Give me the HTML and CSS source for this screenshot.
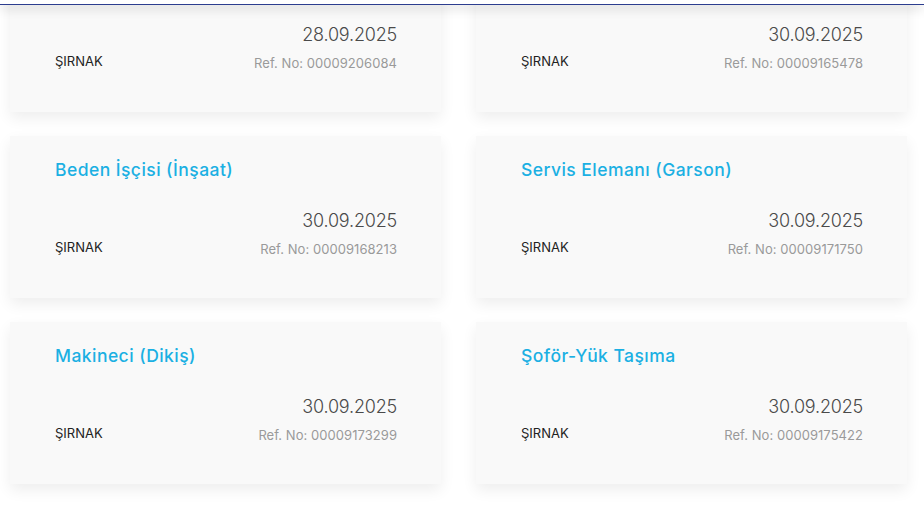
FILE: index.html
```html
<!DOCTYPE html>
<html lang="tr">
<head>
  <meta charset="UTF-8" />
  <meta name="viewport" content="width=device-width, initial-scale=1.0"/>
  <title>İş İlanları</title>
  <link rel="stylesheet" href="styles.css">
</head>
<body>

  <div class="top-bar"></div>

  <div class="job-list">
    <div class="job-card">
      <h3 class="job-title">Garson</h3>
      <div class="job-meta">
        <span class="job-city">ŞIRNAK</span>
        <div class="job-info">
          <span class="job-date">28.09.2025</span>
          <span class="job-ref">Ref. No: 00009206084</span>
        </div>
      </div>
    </div>
    <div class="job-card">
      <h3 class="job-title">Garson</h3>
      <div class="job-meta">
        <span class="job-city">ŞIRNAK</span>
        <div class="job-info">
          <span class="job-date">30.09.2025</span>
          <span class="job-ref">Ref. No: 00009165478</span>
        </div>
      </div>
    </div>

    <div class="job-card">
      <h3 class="job-title">Beden İşçisi (İnşaat)</h3>
      <div class="job-meta">
        <span class="job-city">ŞIRNAK</span>
        <div class="job-info">
          <span class="job-date">30.09.2025</span>
          <span class="job-ref">Ref. No: 00009168213</span>
        </div>
      </div>
    </div>
    <div class="job-card">
      <h3 class="job-title">Servis Elemanı (Garson)</h3>
      <div class="job-meta">
        <span class="job-city">ŞIRNAK</span>
        <div class="job-info">
          <span class="job-date">30.09.2025</span>
          <span class="job-ref">Ref. No: 00009171750</span>
        </div>
      </div>
    </div>

    <div class="job-card">
      <h3 class="job-title">Makineci (Dikiş)</h3>
      <div class="job-meta">
        <span class="job-city">ŞIRNAK</span>
        <div class="job-info">
          <span class="job-date">30.09.2025</span>
          <span class="job-ref">Ref. No: 00009173299</span>
        </div>
      </div>
    </div>
    <div class="job-card">
      <h3 class="job-title">Şoför-Yük Taşıma</h3>
      <div class="job-meta">
        <span class="job-city">ŞIRNAK</span>
        <div class="job-info">
          <span class="job-date">30.09.2025</span>
          <span class="job-ref">Ref. No: 00009175422</span>
        </div>
      </div>
    </div>
  </div>

</body>
</html>
```

FILE: styles.css
```css
:root {
  --title: #1bb0e3;
  --text: #222;
  --date: #4a4a4a;
  --muted: #9a9a9a;
  --card-bg: #f9f9f9;
  --line: #2c3d8f;
}

* {
  box-sizing: border-box;
  margin: 0;
  padding: 0;
}

body {
  font-family: Inter, "Open Sans", sans-serif;
  background: #fff;
  overflow: hidden;
}

/* header is scrolled away, only its edge shows */
.top-bar {
  position: fixed;
  top: 0;
  left: 0;
  right: 0;
  height: 5px;
  background: #fff;
  border-bottom: 1px solid var(--line);
  box-shadow: 0 3px 12px rgba(0, 0, 0, 0.18);
  z-index: 10;
}

.job-list {
  display: grid;
  grid-template-columns: 431px 431px;
  column-gap: 35px;
  row-gap: 24px;
  padding: 0 0 40px 10px;
  margin-top: -50px;
}

.job-card {
  background: var(--card-bg);
  padding: 22px 44px 39px 45px;
  box-shadow: 0 6px 14px rgba(0, 0, 0, 0.07);
  height: 162px;
}

.job-title {
  font-size: 17.5px;
  font-weight: 500;
  line-height: 24px;
  color: var(--title);
  letter-spacing: 0.45px;
}

.job-meta {
  display: flex;
  justify-content: space-between;
  align-items: flex-end;
  margin-top: 27px;
}

.job-city {
  font-size: 13px;
  color: var(--text);
  line-height: 20px;
  margin-bottom: 2px;
}

.job-info {
  display: flex;
  flex-direction: column;
  align-items: flex-end;
  gap: 6px;
}

.job-date {
  font-size: 18px;
  font-weight: 300;
  color: var(--date);
  line-height: 24px;
  letter-spacing: -0.2px;
}

.job-ref {
  font-size: 13px;
  color: var(--muted);
  line-height: 20px;
  letter-spacing: 0.05px;
}
```
